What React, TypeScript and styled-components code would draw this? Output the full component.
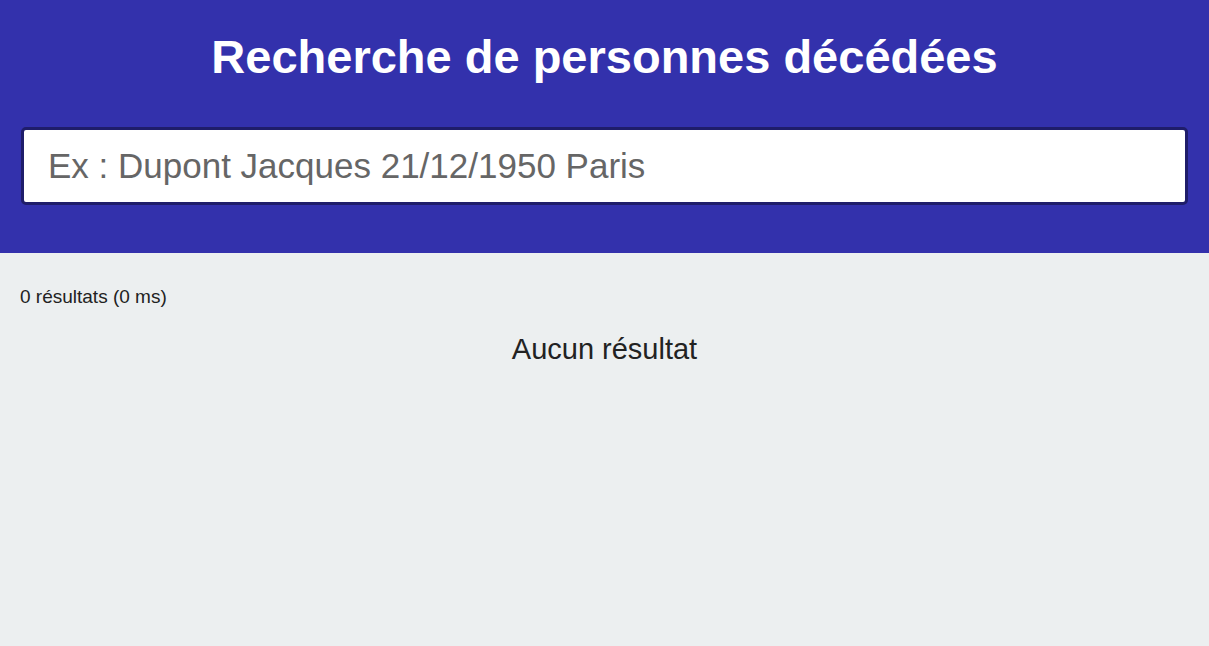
import React from "react";
import styled, { createGlobalStyle } from "styled-components";

const Global = createGlobalStyle`
  html, body { margin: 0; padding: 0; background: #eceff0; }
  body { font-family: "Liberation Sans", Arial, sans-serif; }
  * { box-sizing: border-box; }
`;

const Page = styled.div`
  min-height: 646px;
  background: #eceff0;
  display: flex;
  flex-direction: column;
`;

const Header = styled.header`
  background: #3331ac;
  height: 253px;
  padding: 30px 21px 0 21px;
  display: flex;
  flex-direction: column;
  align-items: stretch;
`;

const Title = styled.h1`
  margin: 0;
  color: #ffffff;
  font-size: 47px;
  line-height: 54px;
  font-weight: 700;
  text-align: center;
`;

const SearchInput = styled.input`
  margin-top: 43px;
  height: 78px;
  width: 100%;
  border: 3px solid #1f1d6a;
  border-radius: 5px;
  background: #ffffff;
  padding: 0 24px;
  font-family: "Liberation Sans", Arial, sans-serif;
  font-size: 35px;
  color: #333;
  outline: none;
  &::placeholder { color: #666666; }
`;

const Results = styled.main`
  padding: 33px 20px 0 20px;
  display: flex;
  flex-direction: column;
  color: #222;
`;

const Stats = styled.div`
  font-size: 19px;
  line-height: 22px;
`;

const Empty = styled.div`
  margin-top: 24px;
  text-align: center;
  font-size: 29px;
  line-height: 34px;
`;

export default function App() {
  return (
    <Page>
      <Global />
      <Header>
        <Title>Recherche de personnes décédées</Title>
        <SearchInput placeholder="Ex : Dupont Jacques 21/12/1950 Paris" />
      </Header>
      <Results>
        <Stats>0 résultats (0 ms)</Stats>
        <Empty>Aucun résultat</Empty>
      </Results>
    </Page>
  );
}
